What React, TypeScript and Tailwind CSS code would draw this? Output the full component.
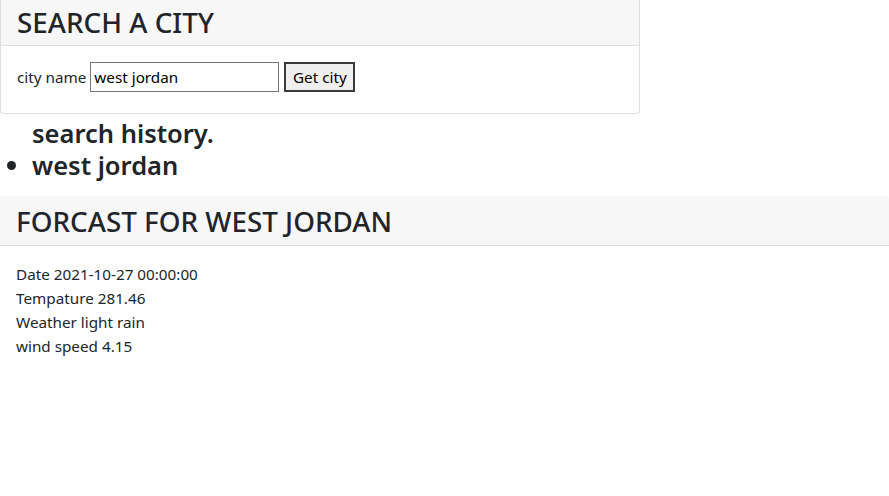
import React from 'react';

const FONT = { fontFamily: '"Segoe UI", "Noto Sans", "Liberation Sans", sans-serif' };

export default function App() {
  return (
    <div className="min-h-screen bg-white text-[15.25px] leading-6 text-[#212529]" style={FONT}>
      <div className="w-[640px] rounded-b border border-t-0 border-[#dfdfdf]">
        <div className="h-[46px] border-b border-[#dfdfdf] bg-[#f7f7f7] px-4 pt-[5px]">
          <h2 className="text-[27.8px] font-medium leading-[35px]">SEARCH A CITY</h2>
        </div>
        <div className="h-[67px] px-4 pt-4">
          <form className="flex items-center" onSubmit={(e) => e.preventDefault()}>
            <label htmlFor="city" className="mr-1">city name</label>
            <input
              id="city"
              defaultValue="west jordan"
              className="h-[30px] w-[189px] border border-[#767676] px-[3px] text-[15.25px] text-black outline-none"
            />
            <button className="ml-[5px] h-[30px] w-[71px] border-2 border-[#3b3b3b] bg-[#efefef] text-[15.25px] text-black">
              Get city
            </button>
          </form>
        </div>
      </div>

      <ul className="list-disc pl-8 pt-[3px]">
        <li className="list-none text-[25.5px] font-semibold leading-8">search history.</li>
        <li className="text-[25.5px] font-semibold leading-8">west jordan</li>
      </ul>

      <div className="mt-[15px] rounded-t">
        <div className="h-[50px] rounded-t border-b border-[#dfdfdf] bg-[#f7f7f7] px-4 pt-[8px]">
          <h2 className="text-[27.8px] font-medium leading-[35px]">FORCAST FOR WEST JORDAN</h2>
        </div>
        <div className="px-4 pt-4">
          <p>Date 2021-10-27 00:00:00</p>
          <p>Tempature 281.46</p>
          <p>Weather light rain</p>
          <p>wind speed 4.15</p>
        </div>
      </div>
    </div>
  );
}
